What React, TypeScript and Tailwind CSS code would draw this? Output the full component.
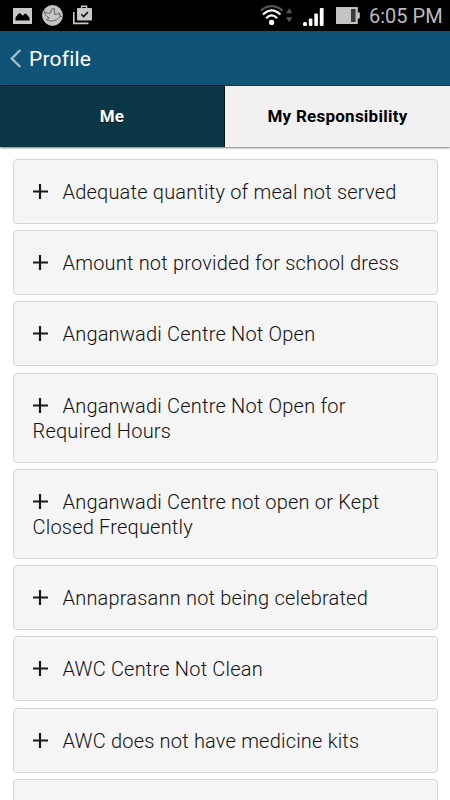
const issues = [
  "Adequate quantity of meal not served",
  "Amount not provided for school dress",
  "Anganwadi Centre Not Open",
  "Anganwadi Centre Not Open for Required Hours",
  "Anganwadi Centre not open or Kept Closed Frequently",
  "Annaprasann not being celebrated",
  "AWC Centre Not Clean",
  "AWC does not have medicine kits",
];

function PictureIcon() {
  return (
    <svg className="w-[19px] h-4" viewBox="0 0 19 16">
      <path fill="#c9c9c9" fillRule="evenodd" d="M0 0h19v16H0zM2.5 12.5h14V9.8L13.6 6.2Q12.4 4.8 11.2 6.2L9.8 7.7 8 5.8Q6.6 4.6 5.4 5.8L2.5 9.4z" />
    </svg>
  );
}

function BirdIcon() {
  return (
    <svg className="size-[21px]" viewBox="0 0 21 21">
      <circle cx="10.5" cy="10.5" r="10.4" fill="#c4c4c4" />
      <path fill="none" stroke="#4b4b4b" strokeWidth=".8" strokeLinejoin="round" d="M2.2 6.2c1.6 1.8 4 2.4 6.4 1.8L9.4 4.2l3.4-.6-.7 1.6.6 4.3c2.3.3 3.6-1.6 5.3-1.2l-.8 1.5 2.4 1.6c-2.6-.3-2.6 1.8-5.4 3.6-3.2 1.7-6.8 1.2-9.6-.4l2.5-1.8C4.5 12 2.6 9.4 2.2 6.2z" />
    </svg>
  );
}

function TaskBagIcon() {
  return (
    <svg className="w-[19px] h-5" viewBox="0 0 19 20">
      <path fill="none" stroke="#c9c9c9" strokeWidth="1.6" d="M.8 7v11.4H15.5" />
      <path fill="none" stroke="#c9c9c9" strokeWidth="1.4" d="M8.6 4V1.2h5V4" />
      <rect x="4" y="3" width="15" height="12.5" rx="1" fill="#c9c9c9" />
      <path fill="none" stroke="#111" strokeWidth="1.6" d="M8.3 9.2l2.3 2.3 4.3-4.4" />
    </svg>
  );
}

function WifiIcon() {
  return (
    <svg className="w-[33px] h-[21px]" viewBox="0 0 33 21">
      <g fill="none" strokeWidth="2.1">
        <path stroke="#555" d="M.8 5.6Q11.6-3.2 22.6 5.6" />
        <path stroke="#fff" d="M3 9.6Q11.6 1.2 20.4 9.6" />
        <path stroke="#fff" d="M6.2 13.2Q11.6 7.6 17.2 13.2" />
      </g>
      <circle cx="11.6" cy="17.4" r="2.6" fill="#fff" />
      <path fill="#555" d="M26 8.2h6.4l-3.2-5zM26 12.3h6.4l-3.2 5z" />
    </svg>
  );
}

function SignalIcon() {
  return (
    <svg className="w-[21px] h-[18px]" viewBox="0 0 21 18">
      <g fill="#fff">
        <rect x="0" y="14" width="4" height="4" rx="1.5" />
        <rect x="5.8" y="10.5" width="3.6" height="7.5" rx="1" />
        <rect x="11.3" y="5.5" width="3.6" height="12.5" rx="1" />
        <rect x="16.8" y="0" width="3.8" height="18" rx="1" />
      </g>
    </svg>
  );
}

function BatteryIcon() {
  return (
    <svg className="w-6 h-[17px]" viewBox="0 0 24 17">
      <path fill="#c4c4c4" d="M.5 0h20.7q.6 0 .6.6v5h2v5.8h-2v5q0 .6-.6.6H.5Q0 17 0 16.4V.6Q0 0 .5 0z" />
      <path fill="#3b3b3b" d="M15 2h4.6v13H15z" />
    </svg>
  );
}

function StatusBar() {
  return (
    <div className="flex h-[31px] shrink-0 items-center bg-black pl-[13px] pr-2">
      <PictureIcon />
      <div className="ml-[10px]"><BirdIcon /></div>
      <div className="ml-[10px] -mt-[2px]"><TaskBagIcon /></div>
      <div className="ml-auto mr-[10px]"><WifiIcon /></div>
      <div className="mr-3 mt-[3px]"><SignalIcon /></div>
      <div className="mr-[9px]"><BatteryIcon /></div>
      <span className="w-[73px] whitespace-nowrap pt-px text-[20px] leading-[31px] text-[#bcbcbc]">6:05 PM</span>
    </div>
  );
}

function IssueCard({ title }: { title: string }) {
  return (
    <button className="w-full shrink-0 rounded-[4px] border border-[#d6d6d6] bg-[#f5f5f5] px-[19px] pt-5 pb-[18px] text-left text-[20px] font-light leading-[25px] tracking-[0.2px] text-[#111]">
      <svg className="mr-[15px] inline-block size-[15px] align-[0px]" viewBox="0 0 15 15">
        <path stroke="#1a1a1a" strokeWidth="2.2" d="M7 0v15M0 7.5h15" />
      </svg>
      {title}
    </button>
  );
}

export default function App() {
  return (
    <div className="flex h-[800px] w-[450px] flex-col overflow-hidden bg-white font-['Roboto',sans-serif]">
      <StatusBar />

      <header className="flex h-[54px] shrink-0 items-center bg-[#0f5476] pl-[10px]">
        <svg className="h-[19px] w-3" viewBox="0 0 12 19">
          <path fill="none" stroke="#a5bdc9" strokeWidth="2.4" d="M10.3 1L1.8 9.5l8.5 8.5" />
        </svg>
        <h1 className="ml-[7px] pt-[2px] text-[21px] leading-[54px] tracking-[0.2px] text-white">Profile</h1>
      </header>

      <nav className="z-10 flex h-[62px] shrink-0 text-[17px] font-bold tracking-[0.25px] shadow-[0_1px_2px_#777]">
        <button className="w-[225px] border-r border-t border-black/70 bg-[#0a3645] text-white [text-shadow:0_1px_0_#111]">Me</button>
        <button className="flex-1 border-t border-[#0b3a52] bg-[#f1f1f1] text-black">My Responsibility</button>
      </nav>

      <main className="flex min-h-0 flex-1 flex-col gap-[6.25px] px-[12.5px] pt-[11.8px]">
        {issues.map((title) => (
          <IssueCard key={title} title={title} />
        ))}
        <div className="h-[65px] shrink-0 rounded-[4px] border border-[#d6d6d6] bg-[#f5f5f5]" />
      </main>
    </div>
  );
}
